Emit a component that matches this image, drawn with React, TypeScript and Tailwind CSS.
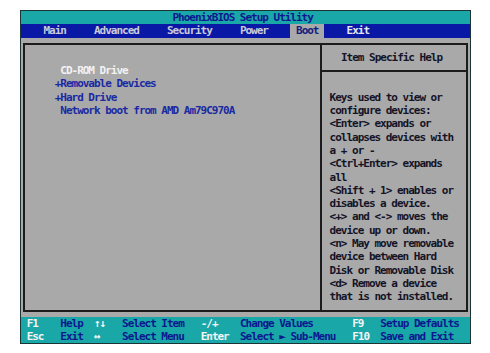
const mono =
  "font-['DejaVu_Sans_Mono','Liberation_Mono',monospace] font-bold text-[11px] tracking-[-1.01px] leading-[13.3px] whitespace-pre";

type Cell = [string, "key" | "desc" | "gap"];

const footerRows: Cell[][] = [
  [
    [" ", "gap"],
    ["F1", "key"],
    ["    ", "gap"],
    ["Help", "desc"],
    ["  ", "gap"],
    ["↑↓", "key"],
    ["   ", "gap"],
    ["Select Item", "desc"],
    ["   ", "gap"],
    ["-/+", "key"],
    ["    ", "gap"],
    ["Change Values", "desc"],
    ["       ", "gap"],
    ["F9", "key"],
    ["   ", "gap"],
    ["Setup Defaults", "desc"],
  ],
  [
    [" ", "gap"],
    ["Esc", "key"],
    ["   ", "gap"],
    ["Exit", "desc"],
    ["  ", "gap"],
    ["↔", "key"],
    ["    ", "gap"],
    ["Select Menu", "desc"],
    ["   ", "gap"],
    ["Enter", "key"],
    ["  ", "gap"],
    ["Select ► Sub-Menu", "desc"],
    ["   ", "gap"],
    ["F10", "key"],
    ["  ", "gap"],
    ["Save and Exit", "desc"],
  ],
];

const bootItems = [
  { text: " CD-ROM Drive", active: true },
  { text: "+Removable Devices", active: false },
  { text: "+Hard Drive", active: false },
  { text: " Network boot from AMD Am79C970A", active: false },
];

const helpLines = [
  "Keys used to view or",
  "configure devices:",
  "<Enter> expands or",
  "collapses devices with",
  "a + or -",
  "<Ctrl+Enter> expands",
  "all",
  "<Shift + 1> enables or",
  "disables a device.",
  "<+> and <-> moves the",
  "device up or down.",
  "<n> May move removable",
  "device between Hard",
  "Disk or Removable Disk",
  "<d> Remove a device",
  "that is not installed.",
];

export default function App() {
  return (
    <div className="h-[353px] w-[490px] bg-white pl-[21px] pt-[11px]">
      <div className={`flex w-[449px] flex-col outline outline-1 outline-[#1d3434] ${mono}`}>
        <div className="h-[13.3px] bg-[#19a7a7] pl-[151.5px] text-[#0c1790]">
          PhoenixBIOS Setup Utility
        </div>

        <div className="flex h-[13.3px] bg-[#0a18a6] text-[#c9cbd8]">
          <span>{"    Main     Advanced     Security     Power    "}</span>
          <span className="bg-[#a9a9a9] text-[#14207e]">{" Boot "}</span>
          <span className="text-[#e4e6ee]">{"    Exit"}</span>
        </div>

        <div className="h-[279.3px] bg-[#a9a9a9] px-[2px] pt-[5.7px]">
          <div className="grid h-[268.4px] grid-cols-[297px_1fr] border-2 border-[#1c1c1c]">
            <div className="border-r-2 border-[#1c1c1c] pl-[29.7px] pt-[18.9px]">
              {bootItems.map((item) => (
                <div
                  key={item.text}
                  className={item.active ? "text-[#f2f2f2]" : "text-[#1b2aa2]"}
                >
                  {item.text}
                </div>
              ))}
            </div>

            <div className="flex flex-col">
              <div className="flex h-[26.7px] items-center border-b-2 border-[#1c1c1c] pl-[19px] text-[#141428]">
                Item Specific Help
              </div>
              <div className="pl-[7.6px] pt-[18.8px] text-[#141428]">
                {helpLines.map((line) => (
                  <div key={line}>{line}</div>
                ))}
              </div>
            </div>
          </div>
        </div>

        <div className="h-[26.6px] bg-[#19a7a7]">
          {footerRows.map((row, i) => (
            <div key={i} className="flex">
              {row.map(([text, kind], j) => (
                <span
                  key={j}
                  className={kind === "key" ? "text-[#f4f4f4]" : "text-[#0c1790]"}
                >
                  {text}
                </span>
              ))}
            </div>
          ))}
        </div>
      </div>
    </div>
  );
}
